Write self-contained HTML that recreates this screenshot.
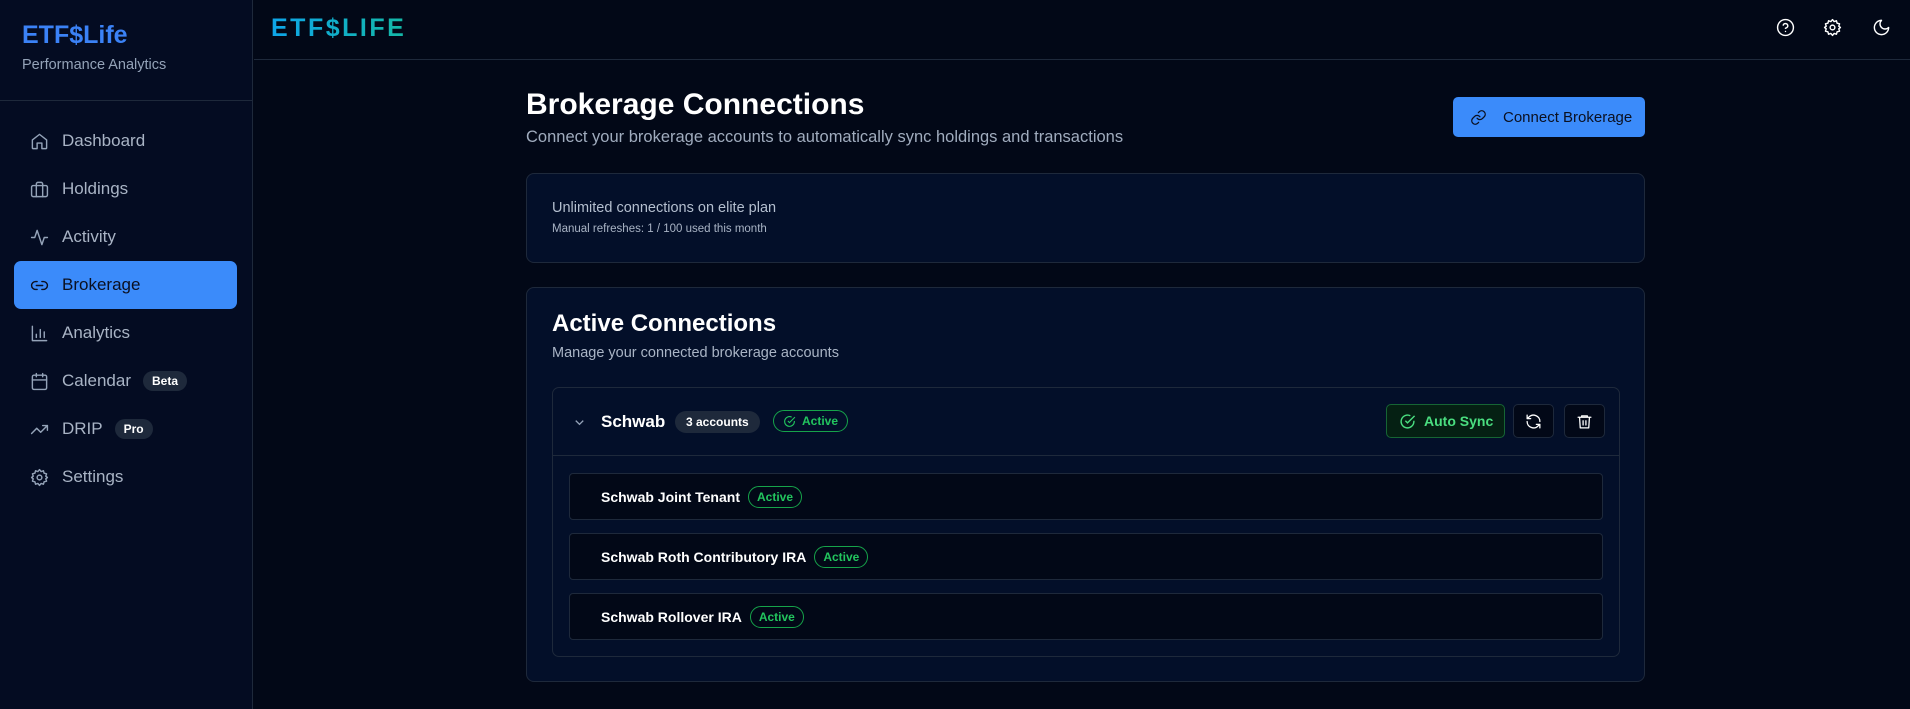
<!DOCTYPE html>
<html><head><meta charset="utf-8"><style>
*{box-sizing:border-box;margin:0;padding:0}
body{width:1910px;height:709px;overflow:hidden;background:#020817;font-family:"Liberation Sans",sans-serif;color:#e2e8f0;position:relative}
.side{position:absolute;left:0;top:0;width:253px;height:709px;background:#040c22;border-right:1px solid #1e293b}
.logo{position:absolute;left:22px;top:21px;font-size:25px;font-weight:bold;color:#3b82f6}
.sub{position:absolute;left:22px;top:57px;font-size:14.5px;color:#94a3b8}
.sdiv{position:absolute;left:0;top:100px;width:253px;border-top:1px solid #1e293b}
.nav{position:absolute;left:14px;width:223px;height:48px;border-radius:7px;display:flex;align-items:center;padding-left:16px;font-size:17px;color:#a9b4c5}
.nav svg{width:19px;height:19px;margin-right:13px;fill:none;stroke:#94a3b8;stroke-width:1.8;stroke-linecap:round;stroke-linejoin:round}
.nav.act{background:#3b8bfa;color:#0b1020}
.nav.act svg{stroke:#0b1020}
.tag{margin-left:12px;background:#1e293b;color:#fff;font-size:12px;font-weight:bold;padding:3px 9px;border-radius:10px}
.hdr{position:absolute;left:254px;top:0;right:0;height:60px;border-bottom:1px solid #1e293b}
.hlogo{position:absolute;left:17px;top:14px;font-size:25px;font-weight:900;letter-spacing:2.5px;background:linear-gradient(90deg,#0ea5e9,#14b8a6);-webkit-background-clip:text;color:transparent}
.hic{position:absolute;top:18px;width:19px;height:19px;fill:none;stroke:#fff;stroke-width:1.8;stroke-linecap:round;stroke-linejoin:round}
h1{position:absolute;left:526px;top:88px;font-size:30px;font-weight:bold;color:#fff}
.p1{position:absolute;left:526px;top:128px;font-size:16.5px;color:#a0acbe}
.btn{position:absolute;left:1453px;top:97px;width:192px;height:40px;background:#3b8bfa;border-radius:5px;color:#0b1020;font-size:15px;display:flex;align-items:center;padding-left:17px;white-space:nowrap}
.btn svg{width:17px;height:17px;margin-right:16px;fill:none;stroke:#0b1020;stroke-width:1.8;stroke-linecap:round}
.card{position:absolute;left:526px;width:1119px;background:#030f29;border:1px solid #1e293b;border-radius:8px}
.inner{position:absolute;left:552px;top:387px;width:1068px;height:270px;border:1px solid #1e293b;border-radius:7px}
.ihd{position:absolute;left:0;top:0;right:0;height:68px;border-bottom:1px solid #1e293b}
.row{position:absolute;left:16px;width:1034px;height:47px;background:#020817;border:1px solid #1e293b;border-radius:4px;display:flex;align-items:center;padding-left:31px;font-size:14px;font-weight:bold;color:#fff}
.gb{border:1.5px solid #16a34a;color:#22c55e;border-radius:11px;font-size:12px;font-weight:bold;padding:3px 8px;margin-left:8px}
.sq{position:absolute;top:16px;width:41px;height:34px;border:1px solid #1e293b;border-radius:5px;background:#020817;display:flex;align-items:center;justify-content:center}
.sq svg{width:17px;height:17px;fill:none;stroke:#fff;stroke-width:1.8;stroke-linecap:round;stroke-linejoin:round}
</style></head><body>
<div class="side">
<div class="logo">ETF$Life</div>
<div class="sub">Performance Analytics</div>
<div class="sdiv"></div>
<div class="nav" style="top:117px"><svg viewBox="0 0 24 24"><path d="M3 10l9-7 9 7v10a1 1 0 0 1-1 1h-5v-7H9v7H4a1 1 0 0 1-1-1z"/></svg>Dashboard</div>
<div class="nav" style="top:165px"><svg viewBox="0 0 24 24"><rect x="2" y="7" width="20" height="14" rx="2"/><path d="M16 21V5a2 2 0 0 0-2-2h-4a2 2 0 0 0-2 2v16"/></svg>Holdings</div>
<div class="nav" style="top:213px"><svg viewBox="0 0 24 24"><path d="M22 12h-4l-3 9L9 3l-3 9H2"/></svg>Activity</div>
<div class="nav act" style="top:261px"><svg viewBox="0 0 24 24"><path d="M9 17H7a5 5 0 0 1 0-10h2M15 7h2a5 5 0 0 1 0 10h-2M8 12h8"/></svg>Brokerage</div>
<div class="nav" style="top:309px"><svg viewBox="0 0 24 24"><path d="M3 3v18h18M8 17v-4M13 17V7M18 17v-7"/></svg>Analytics</div>
<div class="nav" style="top:357px"><svg viewBox="0 0 24 24"><rect x="3" y="4" width="18" height="18" rx="2"/><path d="M16 2v4M8 2v4M3 10h18"/></svg>Calendar<span class="tag">Beta</span></div>
<div class="nav" style="top:405px"><svg viewBox="0 0 24 24"><path d="M22 7l-8.5 8.5-5-5L2 17M16 7h6v6"/></svg>DRIP<span class="tag">Pro</span></div>
<div class="nav" style="top:453px"><svg viewBox="0 0 24 24"><circle cx="12" cy="12" r="3"/><path d="M12 2l2 2.5 3-1 .8 3.1 3.1.8-1 3L22 12l-2.1 1.6 1 3-3.1.8-.8 3.1-3-1L12 22l-2-2.5-3 1-.8-3.1-3.1-.8 1-3L2 12l2.1-1.6-1-3 3.1-.8.8-3.1 3 1z"/></svg>Settings</div>
</div>
<div class="hdr"><div class="hlogo">ETF$LIFE</div>
<svg class="hic" style="left:1522px" viewBox="0 0 24 24"><circle cx="12" cy="12" r="10"/><path d="M9.1 9a3 3 0 0 1 5.8 1c0 2-3 3-3 3M12 17h.01"/></svg>
<svg class="hic" style="left:1569px" viewBox="0 0 24 24"><circle cx="12" cy="12" r="3"/><path d="M12 2l2 2.5 3-1 .8 3.1 3.1.8-1 3L22 12l-2.1 1.6 1 3-3.1.8-.8 3.1-3-1L12 22l-2-2.5-3 1-.8-3.1-3.1-.8 1-3L2 12l2.1-1.6-1-3 3.1-.8.8-3.1 3 1z"/></svg>
<svg class="hic" style="left:1618px" viewBox="0 0 24 24"><path d="M12 3a6 6 0 0 0 9 9 9 9 0 1 1-9-9z"/></svg>
</div>
<h1>Brokerage Connections</h1>
<div class="p1">Connect your brokerage accounts to automatically sync holdings and transactions</div>
<div class="btn"><svg viewBox="0 0 24 24"><path d="M10 13a5 5 0 0 0 7.5.5l3-3a5 5 0 0 0-7-7l-1.7 1.7M14 11a5 5 0 0 0-7.5-.5l-3 3a5 5 0 0 0 7 7l1.7-1.7"/></svg>Connect Brokerage</div>
<div class="card" style="top:173px;height:90px">
<div style="position:absolute;left:25px;top:26px;font-size:14.5px;color:#b4bfcf">Unlimited connections on elite plan</div>
<div style="position:absolute;left:25px;top:49px;font-size:11.5px;color:#a9b4c5">Manual refreshes: 1 / 100 used this month</div>
</div>
<div class="card" style="top:287px;height:395px">
<div style="position:absolute;left:25px;top:22px;font-size:24px;font-weight:bold;color:#fff">Active Connections</div>
<div style="position:absolute;left:25px;top:57px;font-size:14.5px;color:#a9b4c5">Manage your connected brokerage accounts</div>
</div>
<div class="inner">
<div class="ihd">
<svg style="position:absolute;left:19px;top:27px;width:15px;height:15px;fill:none;stroke:#94a3b8;stroke-width:2" viewBox="0 0 24 24"><path d="M6 9l6 6 6-6"/></svg>
<div style="position:absolute;left:48px;top:24px;font-size:17px;font-weight:bold;color:#fff">Schwab</div>
<div style="position:absolute;left:122px;top:23px;background:#1e293b;border-radius:11px;font-size:12px;font-weight:bold;padding:4px 11px;color:#fff">3 accounts</div>
<div style="position:absolute;left:220px;top:22px;border:1.5px solid #16a34a;border-radius:11px;font-size:12px;font-weight:bold;padding:3px 9px 3px 28px;color:#22c55e"><svg style="position:absolute;left:9px;top:4px;width:13px;height:13px;fill:none;stroke:#22c55e;stroke-width:2" viewBox="0 0 24 24"><path d="M21 11v1a9 9 0 1 1-5-8.1M9 11l3 3L22 4"/></svg>Active</div>
<div style="position:absolute;left:833px;top:16px;width:119px;height:34px;border:1px solid #166534;background:#052013;border-radius:5px;color:#4ade80;font-size:14px;font-weight:bold;display:flex;align-items:center;padding-left:37px;white-space:nowrap"><svg style="position:absolute;left:12px;top:8px;width:17px;height:17px;fill:none;stroke:#4ade80;stroke-width:2" viewBox="0 0 24 24"><path d="M21 11v1a9 9 0 1 1-5-8.1M9 11l3 3L22 4"/></svg>Auto Sync</div>
<div class="sq" style="left:960px"><svg viewBox="0 0 24 24"><path d="M21 12a9 9 0 0 0-15.5-6.2L3 8M3 3v5h5M3 12a9 9 0 0 0 15.5 6.2L21 16M21 21v-5h-5"/></svg></div>
<div class="sq" style="left:1011px"><svg viewBox="0 0 24 24"><path d="M3 6h18M8 6V4h8v2M5 6l1 15h12l1-15M10 11v6M14 11v6"/></svg></div>
</div>
<div class="row" style="top:85px">Schwab Joint Tenant<span class="gb">Active</span></div>
<div class="row" style="top:145px">Schwab Roth Contributory IRA<span class="gb">Active</span></div>
<div class="row" style="top:205px">Schwab Rollover IRA<span class="gb">Active</span></div>
</div>
</body></html>
